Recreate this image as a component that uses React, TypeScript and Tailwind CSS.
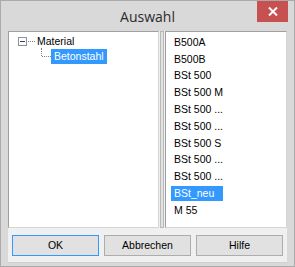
import React from "react";

const items = [
  "B500A",
  "B500B",
  "BSt 500",
  "BSt 500 M",
  "BSt 500 ...",
  "BSt 500 ...",
  "BSt 500 S",
  "BSt 500 ...",
  "BSt 500 ...",
  "BSt_neu",
  "M 55",
];

export default function App() {
  return (
    <div
      className="relative w-[295px] h-[267px] bg-[#d9d9d9] border border-[#aaaaaa] overflow-hidden"
      style={{ fontFamily: '"Liberation Sans", Arial, sans-serif' }}
    >
      {/* title bar */}
      <div className="relative h-[30px] flex items-center justify-center">
        <span
          className="text-[14px] text-[#2b2b2b] mt-[1px]"
          style={{ fontFamily: '"Open Sans", "Noto Sans", sans-serif' }}
        >
          Auswahl
        </span>
        <div className="absolute right-[6px] top-0 w-[31px] h-[21px] bg-[#c75050] flex items-center justify-center">
          <svg width="10" height="9" viewBox="0 0 10 9">
            <path d="M1 0.5 L9 8.5 M9 0.5 L1 8.5" stroke="white" strokeWidth="2" />
          </svg>
        </div>
      </div>

      {/* client */}
      <div className="mx-[7px] bg-[#f0f0f0] pb-[6px] border-b border-[#cfcfcf]">
        <div className="flex h-[197px] text-[10.5px] text-black">
          {/* tree */}
          <div className="w-[151px] h-full bg-white border border-t-[#a0a0a0] border-l-[#a0a0a0] border-r-[#d5d5d5] border-b-[#d5d5d5] relative">
            <div className="absolute left-[9px] top-[5px] w-[9px] h-[9px] border border-[#919191] bg-white flex items-center justify-center">
              <div className="w-[5px] h-[1px] bg-[#1f3f8f]" />
            </div>
            <div className="absolute left-[19px] top-[9px] w-[7px] border-t border-dotted border-[#808080]" />
            <div className="absolute left-[28px] top-[3px] leading-[13px]">Material</div>
            <div className="absolute left-[32px] top-[16px] h-[8px] border-l border-dotted border-[#808080]" />
            <div className="absolute left-[33px] top-[24px] w-[9px] border-t border-dotted border-[#808080]" />
            <div className="absolute left-[42px] top-[17px] h-[15px] px-[3px] bg-[#3399ff] text-white leading-[15px]">
              Betonstahl
            </div>
          </div>
          {/* splitter */}
          <div className="w-[6px] h-full flex justify-center">
            <div className="w-[4px] h-full bg-[#e3e3e3] border border-[#b9b9b9]" />
          </div>
          {/* list */}
          <div className="flex-1 h-full bg-white border border-t-[#a0a0a0] border-l-[#a0a0a0] border-r-[#d5d5d5] border-b-[#d5d5d5] pt-[2px] pl-[5px]">
            {items.map((it, i) => (
              <div key={i} className="h-[16.8px] flex items-center">
                <span
                  className={
                    "px-[3px] leading-[15px] " +
                    (it === "BSt_neu" ? "bg-[#3399ff] text-white pr-[9px]" : "")
                  }
                >
                  {it}
                </span>
              </div>
            ))}
          </div>
        </div>

        {/* buttons */}
        <div className="flex gap-[5px] pl-[4px] mt-[7px] text-[10.5px] text-black">
          <button className="w-[87px] h-[21px] bg-[#e1e1e1] border border-[#3399ff]">OK</button>
          <button className="w-[87px] h-[21px] bg-[#e1e1e1] border border-[#adadad]">Abbrechen</button>
          <button className="w-[87px] h-[21px] bg-[#e1e1e1] border border-[#adadad]">Hilfe</button>
        </div>
      </div>
    </div>
  );
}
